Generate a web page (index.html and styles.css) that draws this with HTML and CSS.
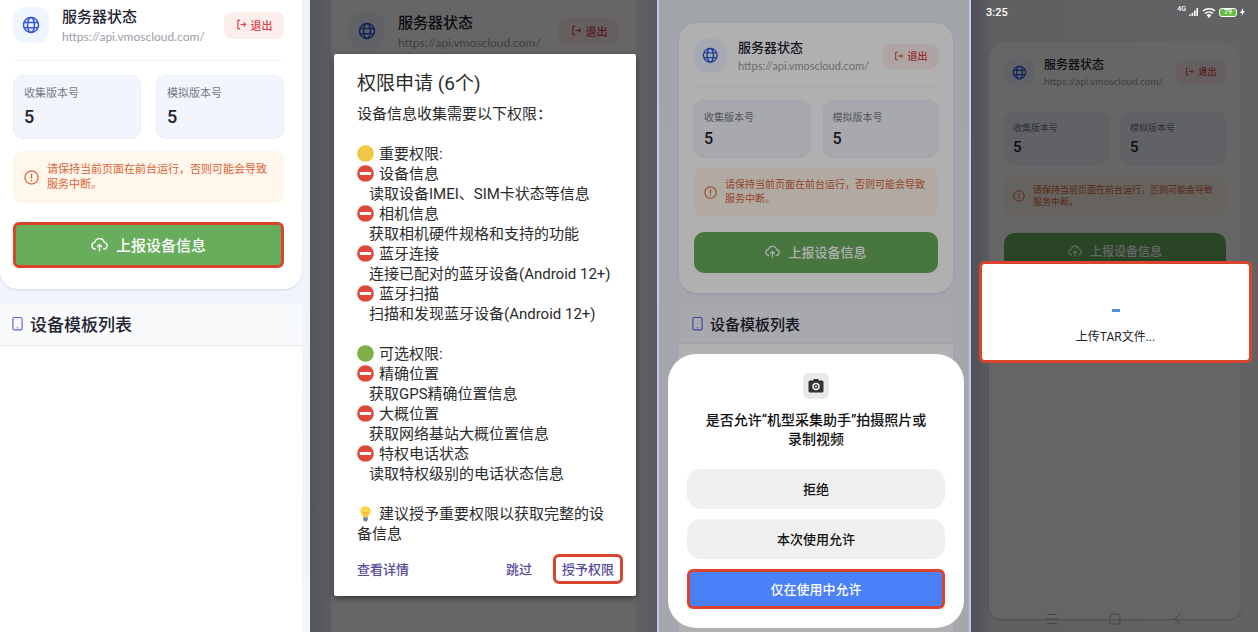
FILE: index.html
```html
<!DOCTYPE html>
<html lang="zh-CN">
<head>
    <meta charset="UTF-8">
    <meta name="viewport" content="width=device-width, initial-scale=1.0">
    <title>设备信息上报</title>
    <link rel="stylesheet" href="styles.css">
</head>
<body>
    <!-- Shared icons -->
    <svg class="sprite" aria-hidden="true">
        <symbol id="globe" viewBox="0 0 24 24">
            <g fill="none" stroke="currentColor" stroke-width="2">
                <circle cx="12" cy="12" r="10"/>
                <ellipse cx="12" cy="12" rx="4.6" ry="10"/>
                <path d="M3 8.5h18M3 15.5h18"/>
            </g>
        </symbol>
        <symbol id="logout" viewBox="0 0 24 24">
            <path d="M9 3H4v18h5M10 12h11M16.5 7.5L21 12l-4.5 4.5" fill="none" stroke="currentColor" stroke-width="2.4" stroke-linejoin="round"/>
        </symbol>
        <symbol id="warn" viewBox="0 0 24 24">
            <circle cx="12" cy="12" r="10.5" fill="none" stroke="currentColor" stroke-width="2"/>
            <path d="M12 6.5v7M12 15.5v2.5" stroke="currentColor" stroke-width="2.2"/>
        </symbol>
        <symbol id="cloud" viewBox="0 0 24 24">
            <path d="M7 18.5H6a4.8 4.8 0 0 1-.8-9.5 7 7 0 0 1 13.6 0A4.8 4.8 0 0 1 18 18.5h-1M12 21.5V12.5M8.5 15.5L12 12l3.5 3.5" fill="none" stroke="currentColor" stroke-width="2" stroke-linejoin="round"/>
        </symbol>
        <symbol id="device" viewBox="0 0 12 16">
            <rect x="1" y="1.5" width="10" height="13.5" rx="1.5" fill="none" stroke="currentColor" stroke-width="1.2"/>
            <circle cx="6" cy="12.5" r=".7" fill="currentColor"/>
        </symbol>
        <symbol id="stop" viewBox="0 0 18 18">
            <circle cx="9" cy="9" r="8.8" fill="#e0483c"/>
            <rect x="3" y="7.5" width="12" height="3" rx=".5" fill="#fff"/>
        </symbol>
        <symbol id="yellow" viewBox="0 0 18 18">
            <circle cx="9" cy="9" r="8.8" fill="#f2c744"/>
        </symbol>
        <symbol id="green" viewBox="0 0 18 18">
            <circle cx="9" cy="9" r="8.8" fill="#80b04c"/>
        </symbol>
        <symbol id="bulb" viewBox="0 0 18 18">
            <path d="M9 1a5.6 5.6 0 0 0-5.6 5.6c0 2.7 2.3 3.7 2.9 6.4h5.4c.6-2.7 2.9-3.7 2.9-6.4A5.6 5.6 0 0 0 9 1z" fill="#fbd94a"/>
            <path d="M7.5 12.5L7 7.5l2 1 2-1-.5 5" fill="none" stroke="#e8a02c" stroke-width=".8"/>
            <path d="M6.6 13h4.8v3L10 17.5H8L6.6 16z" fill="#6f8796"/>
        </symbol>
    </svg>

    <main class="board">
        <!-- Step 1: report button -->
        <section class="phone phone-home">
            <div class="page">
                <div class="card">
                    <div class="card-head">
                        <span class="globe"><svg><use href="#globe"/></svg></span>
                        <div class="server">
                            <h2>服务器状态</h2>
                            <p>https://api.vmoscloud.com/</p>
                        </div>
                        <button type="button" class="logout"><svg><use href="#logout"/></svg>退出</button>
                    </div>
                    <div class="stats">
                        <div class="stat"><span>收集版本号</span><strong>5</strong></div>
                        <div class="stat"><span>模拟版本号</span><strong>5</strong></div>
                    </div>
                    <div class="notice">
                        <svg><use href="#warn"/></svg>
                        <p>请保持当前页面在前台运行，否则可能会导致服务中断。</p>
                    </div>
                    <button type="button" class="report marked"><svg><use href="#cloud"/></svg>上报设备信息</button>
                </div>
                <div class="list">
                    <h3><svg><use href="#device"/></svg>设备模板列表</h3>
                </div>
            </div>
        </section>

        <!-- Step 2: permission dialog -->
        <section class="phone phone-perm">
            <div class="page">
                <div class="card">
                    <div class="card-head">
                        <span class="globe"><svg><use href="#globe"/></svg></span>
                        <div class="server">
                            <h2>服务器状态</h2>
                            <p>https://api.vmoscloud.com/</p>
                        </div>
                        <button type="button" class="logout"><svg><use href="#logout"/></svg>退出</button>
                    </div>
                </div>
            </div>
            <div class="overlay">
                <div class="dialog" role="dialog" aria-labelledby="perm-title">
                    <h2 id="perm-title">权限申请 (6个)</h2>
                    <div class="dialog-body">
                        <p>设备信息收集需要以下权限：</p>
                        <ul>
                            <li><svg><use href="#yellow"/></svg>重要权限:</li>
                            <li><svg><use href="#stop"/></svg>设备信息</li>
                            <li class="detail">读取设备IMEI、SIM卡状态等信息</li>
                            <li><svg><use href="#stop"/></svg>相机信息</li>
                            <li class="detail">获取相机硬件规格和支持的功能</li>
                            <li><svg><use href="#stop"/></svg>蓝牙连接</li>
                            <li class="detail">连接已配对的蓝牙设备(Android 12+)</li>
                            <li><svg><use href="#stop"/></svg>蓝牙扫描</li>
                            <li class="detail">扫描和发现蓝牙设备(Android 12+)</li>
                        </ul>
                        <ul>
                            <li><svg><use href="#green"/></svg>可选权限:</li>
                            <li><svg><use href="#stop"/></svg>精确位置</li>
                            <li class="detail">获取GPS精确位置信息</li>
                            <li><svg><use href="#stop"/></svg>大概位置</li>
                            <li class="detail">获取网络基站大概位置信息</li>
                            <li><svg><use href="#stop"/></svg>特权电话状态</li>
                            <li class="detail">读取特权级别的电话状态信息</li>
                        </ul>
                        <p class="tip"><svg><use href="#bulb"/></svg>建议授予重要权限以获取完整的设备信息</p>
                    </div>
                    <div class="actions">
                        <button type="button" class="more">查看详情</button>
                        <button type="button">跳过</button>
                        <button type="button" class="marked">授予权限</button>
                    </div>
                </div>
            </div>
        </section>

        <!-- Step 3: camera permission sheet -->
        <section class="phone phone-camera">
            <div class="page">
                <div class="card">
                    <div class="card-head">
                        <span class="globe"><svg><use href="#globe"/></svg></span>
                        <div class="server">
                            <h2>服务器状态</h2>
                            <p>https://api.vmoscloud.com/</p>
                        </div>
                        <button type="button" class="logout"><svg><use href="#logout"/></svg>退出</button>
                    </div>
                    <div class="stats">
                        <div class="stat"><span>收集版本号</span><strong>5</strong></div>
                        <div class="stat"><span>模拟版本号</span><strong>5</strong></div>
                    </div>
                    <div class="notice">
                        <svg><use href="#warn"/></svg>
                        <p>请保持当前页面在前台运行，否则可能会导致服务中断。</p>
                    </div>
                    <button type="button" class="report"><svg><use href="#cloud"/></svg>上报设备信息</button>
                </div>
                <div class="list">
                    <h3><svg><use href="#device"/></svg>设备模板列表</h3>
                </div>
            </div>
            <div class="overlay">
                <div class="sheet" role="dialog" aria-labelledby="camera-title">
                    <span class="camera">
                        <svg viewBox="0 0 16 16">
                            <path d="M5 2.5L6 1h4l1 1.5h3A1.5 1.5 0 0 1 15.5 4v9A1.5 1.5 0 0 1 14 14.5H2A1.5 1.5 0 0 1 .5 13V4A1.5 1.5 0 0 1 2 2.5z" fill="#333"/>
                            <circle cx="8" cy="8.5" r="3" fill="#333" stroke="#eee" stroke-width="1.5"/>
                            <circle cx="8" cy="8.5" r="1" fill="#eee"/>
                        </svg>
                    </span>
                    <h2 id="camera-title">是否允许“机型采集助手”拍摄照片或录制视频</h2>
                    <div class="choices">
                        <button type="button">拒绝</button>
                        <button type="button">本次使用允许</button>
                        <button type="button" class="primary marked">仅在使用中允许</button>
                    </div>
                </div>
            </div>
        </section>

        <!-- Step 4: upload progress -->
        <section class="phone phone-upload">
            <div class="page">
                <div class="card">
                    <div class="card-head">
                        <span class="globe"><svg><use href="#globe"/></svg></span>
                        <div class="server">
                            <h2>服务器状态</h2>
                            <p>https://api.vmoscloud.com/</p>
                        </div>
                        <button type="button" class="logout"><svg><use href="#logout"/></svg>退出</button>
                    </div>
                    <div class="stats">
                        <div class="stat"><span>收集版本号</span><strong>5</strong></div>
                        <div class="stat"><span>模拟版本号</span><strong>5</strong></div>
                    </div>
                    <div class="notice">
                        <svg><use href="#warn"/></svg>
                        <p>请保持当前页面在前台运行，否则可能会导致服务中断。</p>
                    </div>
                    <button type="button" class="report"><svg><use href="#cloud"/></svg>上报设备信息</button>
                </div>
                <div class="list"></div>
            </div>
            <div class="overlay">
                <div class="statusbar">
                    <time>3:25</time>
                    <span class="network">4G</span>
                    <svg class="signal" viewBox="0 0 12 10"><path d="M1 10V8M4 10V6M7 10V3M10 10V0" stroke="#fff" stroke-width="2"/></svg>
                    <svg class="wifi" viewBox="0 0 14 11"><path d="M1 4a9 9 0 0 1 12 0M3 6.5a6 6 0 0 1 8 0" fill="none" stroke="#fff" stroke-width="1.6"/><path d="M4.5 8a4 4 0 0 1 5 0L7 11z" fill="#fff"/></svg>
                    <span class="battery">79</span>
                    <svg class="bolt" viewBox="0 0 5 8"><path d="M3 0L0 5h2L1.5 8 5 3H3z" fill="#fff"/></svg>
                </div>
                <div class="progress-area">
                    <div class="progress marked" role="status">
                        <span class="spinner"></span>
                        <p>上传TAR文件...</p>
                    </div>
                </div>
                <nav class="navbar">
                    <svg viewBox="0 0 12 12"><path d="M1 1.5h10M1 6h10M1 10.5h10"/></svg>
                    <svg viewBox="0 0 12 12"><rect x="1" y="1" width="10" height="10" rx="2"/></svg>
                    <svg viewBox="0 0 12 12"><path d="M8 1L3 6l5 5"/></svg>
                </nav>
            </div>
        </section>
    </main>
</body>
</html>
```
FILE: styles.css
```css
* {
    box-sizing: border-box;
}

body {
    margin: 0;
    font-family: Roboto, "Noto Sans CJK SC", sans-serif;
    color: #1f2430;
}

h2, h3, p, ul {
    margin: 0;
    padding: 0;
    font-weight: normal;
}

ul {
    list-style: none;
}

button {
    margin: 0;
    padding: 0 0 2px;
    border: none;
    background: none;
    font-family: inherit;
    cursor: pointer;
}

.sprite {
    display: none;
}

.board {
    display: grid;
    grid-template-columns: 310fr 347fr 314fr 287fr;
    min-height: 100vh;
    overflow: hidden;
}

/* Phone: sizes of the shared card */
.phone {
    --icon: 36px;
    --gap: 13px;
    --title: 15px;
    --title-line: 20px;
    --small: 12px;
    --label: 11px;
    --value: 18px;
    --line: 15px;
    --heading: 17px;
    position: relative;
    display: flex;
    overflow: hidden;
    background: linear-gradient(#eef3fb, #f2f5fd);
}

.page {
    flex: 1;
    display: flex;
    flex-direction: column;
    min-width: 0;
}

.card {
    padding: 7px 18px 21px;
    background: #fff;
    border-radius: 18px;
    box-shadow: 0 1px 2px rgba(40, 60, 110, 0.14);
}

.card-head {
    display: flex;
    align-items: flex-start;
    gap: var(--gap);
    padding-bottom: 13px;
    border-bottom: 1px solid #f3f4f6;
}

.globe {
    display: flex;
    align-items: center;
    justify-content: center;
    width: var(--icon);
    height: var(--icon);
    border-radius: 12px;
    background: #eff6ff;
    color: #3155dd;
}

.globe svg {
    width: 50%;
    height: 50%;
}

.server {
    flex: 1;
    min-width: 0;
    line-height: var(--title-line);
}

.server h2 {
    font-size: var(--title);
    font-weight: 500;
}

.server p {
    font-family: Lato, sans-serif;
    font-size: var(--small);
    color: #9a9da5;
    white-space: nowrap;
}

.logout {
    display: flex;
    align-items: center;
    justify-content: center;
    gap: 4px;
    width: 60px;
    height: 27px;
    margin-top: 5px;
    border-radius: 8px;
    background: #fdeeee;
    color: #dc3f48;
    font-size: var(--label);
    font-weight: 500;
}

.logout svg {
    width: var(--label);
    height: var(--label);
}

.stats {
    display: grid;
    grid-template-columns: 1fr 1fr;
    gap: 15px;
    margin-top: 14px;
}

.stat {
    display: flex;
    flex-direction: column;
    gap: 4px;
    padding: 10px;
    border: 1px solid #e9edf5;
    border-radius: 10px;
    background: #f2f5fd;
}

.stat span {
    font-size: var(--label);
    line-height: 16px;
    color: #777b85;
}

.stat strong {
    font-size: var(--value);
    line-height: 22px;
    font-weight: 500;
}

.notice {
    display: flex;
    align-items: center;
    gap: 8px;
    margin-top: 12px;
    padding: 11px;
    border-radius: 8px;
    background: #fff7eb;
    color: #dc6238;
}

.notice svg {
    flex: none;
    width: 15px;
    height: 15px;
}

.notice p {
    font-size: var(--label);
    line-height: var(--line);
}

.report {
    display: flex;
    align-items: center;
    justify-content: center;
    gap: 8px;
    width: 100%;
    height: 46px;
    margin-top: 19px;
    border-radius: 10px;
    background: #68ad5c;
    color: #fff;
    font-size: var(--title);
    font-weight: 500;
}

.report svg {
    width: 17px;
    height: 17px;
}

.list {
    flex: 1;
    margin-top: 15px;
    background: #fff;
    overflow: hidden;
}

.list h3 {
    display: flex;
    align-items: center;
    gap: 7px;
    height: 42px;
    padding: 0 0 2px 12px;
    border-bottom: 1px solid #e8ebf0;
    background: #f8fafc;
    font-size: var(--heading);
    font-weight: 500;
}

.list h3 svg {
    width: 11px;
    height: 15px;
    color: #6459e8;
}

/* Dimmed layer over the page */
.overlay {
    position: absolute;
    inset: 0;
    display: flex;
    background: rgba(0, 0, 0, 0.6);
}

/* Red frame around the control to tap */
.marked {
    border: 3px solid #db442c;
    border-radius: 6px;
}

/* Step 1 */
.phone-home .page {
    padding-right: 8px;
}

.phone-home .card {
    padding-left: 13px;
    border-radius: 0 0 18px 18px;
}

/* Step 2 */
.phone-perm {
    background: linear-gradient(90deg, #d0d7df, #e9eef6 8%, #f4f5fa 94%, #e2e4f0);
}

.phone-perm .page {
    padding: 0 20px 0 21px;
}

.phone-perm .card {
    flex: 1;
    padding-top: 13px;
    border-radius: 0;
}

.phone-perm .overlay {
    align-items: flex-start;
    padding: 54px 21px 0 24px;
}

.dialog {
    flex: 1;
    padding: 18px 0 12px;
    background: #fff;
    border-radius: 2px;
    box-shadow: 0 2px 6px rgba(0, 0, 0, 0.5);
    color: #2b2b2b;
}

.dialog h2 {
    padding: 0 23px;
    font-size: 19px;
    line-height: 24px;
}

.dialog-body {
    margin-top: 8px;
    padding: 0 23px;
    font-size: 15px;
    line-height: 20px;
}

.dialog-body ul,
.tip {
    margin-top: 20px;
}

.dialog-body li {
    white-space: nowrap;
}

.dialog-body svg {
    width: 17px;
    height: 17px;
    margin-right: 5px;
    vertical-align: -3px;
}

.dialog-body .detail {
    padding-left: 12px;
}

.actions {
    display: flex;
    align-items: center;
    gap: 21px;
    margin-top: 10px;
    padding: 0 13px 0 23px;
}

.actions button {
    height: 30px;
    color: #5b4a9c;
    font-size: 13px;
    font-weight: 500;
}

.actions .more {
    margin-right: auto;
}

.actions .marked {
    padding: 0 6px 2px;
}

/* Step 3 */
.phone-camera {
    --icon: 33px;
    --gap: 11px;
    --title: 13px;
    --title-line: 18px;
    --small: 11px;
    --label: 10px;
    --value: 16px;
    --line: 14px;
    --heading: 15px;
    border: 2px solid #c5c6f3;
    border-width: 0 2px;
    background: linear-gradient(#e8eff5, #f0f2fa 60%);
}

.phone-camera .page {
    padding: 23px 16px 0 20px;
}

.phone-camera .card {
    padding: 16px 15px 20px;
}

.phone-camera .card-head {
    padding-bottom: 11px;
}

.phone-camera .logout {
    width: 55px;
    height: 25px;
}

.phone-camera .stats {
    gap: 13px;
    margin-top: 13px;
}

.phone-camera .stat {
    padding: 9px;
}

.phone-camera .stat span {
    line-height: 15px;
}

.phone-camera .stat strong {
    line-height: 19px;
}

.phone-camera .notice {
    margin-top: 10px;
    padding: 10px;
}

.phone-camera .notice svg {
    width: 13px;
    height: 13px;
}

.phone-camera .report {
    height: 41px;
    margin-top: 16px;
}

.phone-camera .report svg {
    width: 15px;
    height: 15px;
}

.phone-camera .list {
    margin-top: 13px;
}

.phone-camera .list h3 {
    height: 38px;
    padding-left: 13px;
    background: #f3f5fa;
}

.phone-camera .overlay {
    align-items: flex-end;
    padding: 0 5px 4px 9px;
    background: rgba(0, 0, 0, 0.31);
}

.sheet {
    flex: 1;
    display: flex;
    flex-direction: column;
    align-items: center;
    padding: 19px;
    background: #fff;
    border-radius: 28px;
    color: #111;
}

.camera {
    display: flex;
    align-items: center;
    justify-content: center;
    width: 26px;
    height: 26px;
    border-radius: 6px;
    background: #e8e8e8;
}

.camera svg {
    width: 16px;
    height: 16px;
}

.sheet h2 {
    margin: 12px 12px 20px;
    font-size: 14px;
    line-height: 19px;
    font-weight: 500;
    text-align: center;
}

.choices {
    display: flex;
    flex-direction: column;
    gap: 10px;
    width: 100%;
}

.choices button {
    height: 40px;
    border-radius: 14px;
    background: #f0f0f0;
    color: #111;
    font-size: 13px;
    font-weight: 500;
}

.choices .primary {
    border-radius: 6px;
    background: #4a80f8;
    color: #fff;
}

/* Step 4 */
.phone-upload {
    --icon: 30px;
    --gap: 10px;
    --title: 12px;
    --title-line: 16px;
    --small: 10px;
    --label: 9px;
    --value: 15px;
    --line: 12px;
    background: linear-gradient(90deg, #c3c8dc, #eceff5 8%, #f4f6fa);
}

.phone-upload .page {
    padding: 42px 17px 13px 18px;
}

.phone-upload .card {
    padding: 15px;
}

.phone-upload .card-head {
    padding-bottom: 10px;
}

.phone-upload .logout {
    width: 50px;
    height: 23px;
    margin-top: 4px;
}

.phone-upload .stats {
    gap: 12px;
    margin-top: 12px;
}

.phone-upload .stat {
    padding: 8px;
}

.phone-upload .stat span {
    line-height: 14px;
}

.phone-upload .stat strong {
    line-height: 17px;
}

.phone-upload .notice {
    margin-top: 10px;
    padding: 9px;
}

.phone-upload .notice svg {
    width: 12px;
    height: 12px;
}

.phone-upload .report {
    height: 37px;
    margin-top: 16px;
}

.phone-upload .report svg {
    width: 14px;
    height: 14px;
}

.phone-upload .list {
    border-radius: 12px;
    background: #fdfdfe;
    box-shadow: 0 1px 2px rgba(0, 0, 0, 0.2);
}

.phone-upload .overlay {
    flex-direction: column;
}

.statusbar {
    display: flex;
    align-items: center;
    gap: 3px;
    height: 24px;
    padding: 0 13px 0 15px;
    color: #fff;
    font-size: 11px;
    font-weight: 500;
}

.statusbar time {
    margin-right: auto;
}

.network {
    align-self: flex-start;
    padding-top: 5px;
    font-size: 7px;
    line-height: 8px;
}

.signal {
    width: 10px;
    height: 8px;
}

.wifi {
    width: 14px;
    height: 11px;
}

.battery {
    width: 18px;
    height: 9px;
    border: 1px solid #fff;
    border-radius: 3px;
    background: #64bd45;
    font-size: 7px;
    line-height: 7px;
    text-align: center;
}

.bolt {
    width: 5px;
    height: 8px;
}

.progress-area {
    flex: 1;
    display: flex;
    align-items: center;
    padding: 0 6px 0 8px;
}

.progress {
    flex: 1;
    display: flex;
    flex-direction: column;
    align-items: center;
    gap: 15px;
    padding: 45px 0 13px;
    background: #fff;
    color: #222;
    font-size: 12px;
    line-height: 20px;
}

.spinner {
    width: 8px;
    height: 3px;
    background: #4c93dc;
}

.navbar {
    display: flex;
    justify-content: center;
    gap: 51px;
    height: 32px;
    padding-top: 13px;
}

.navbar svg {
    width: 12px;
    height: 12px;
    fill: none;
    stroke: #444;
    stroke-width: 1px;
}
```
